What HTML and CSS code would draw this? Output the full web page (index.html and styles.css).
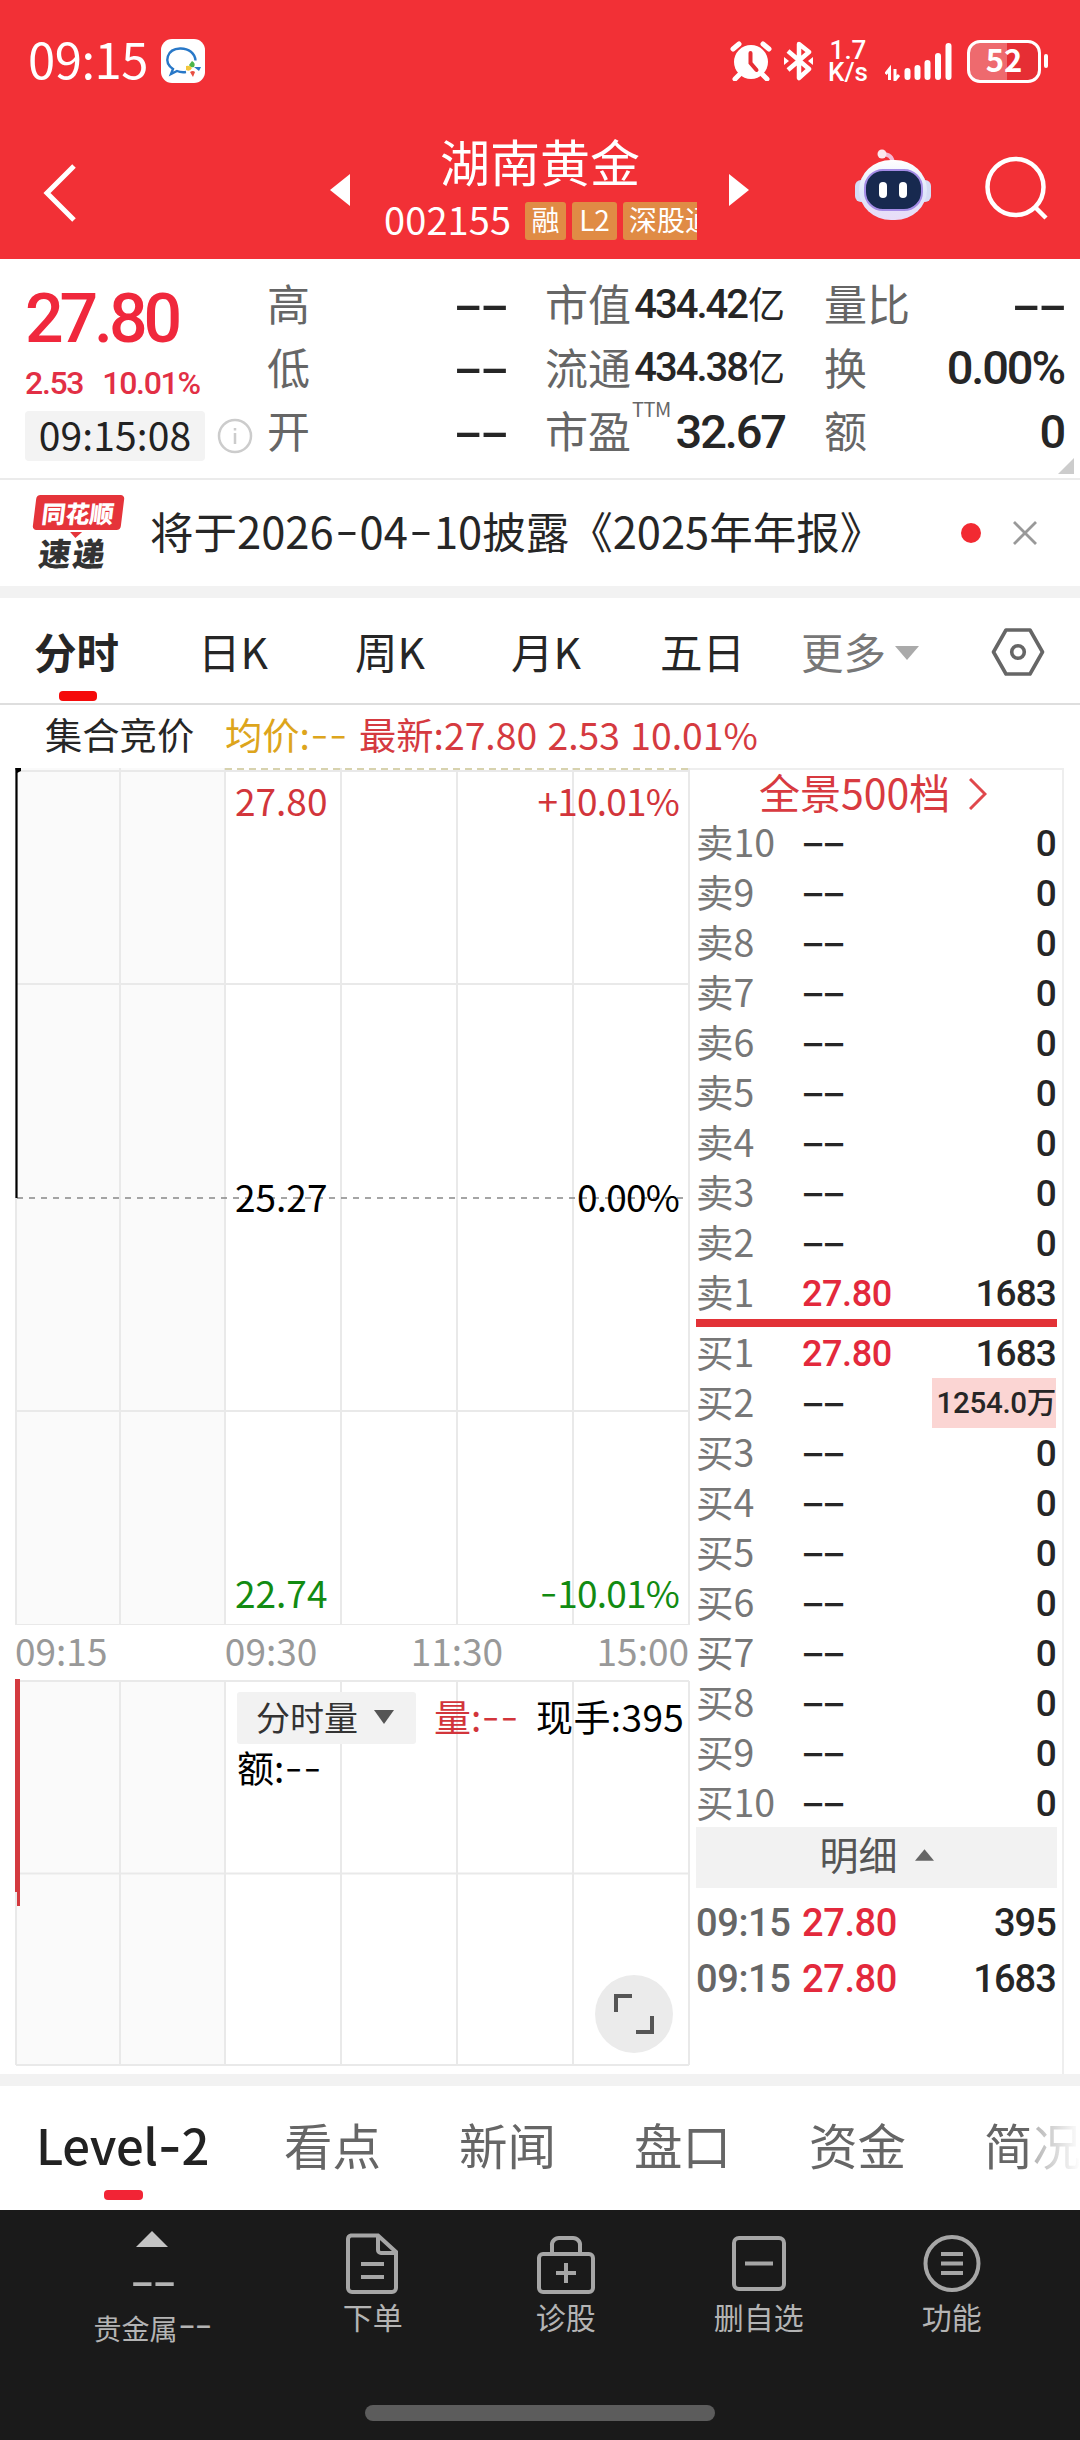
FILE: index.html
```html
<!DOCTYPE html>
<html lang="zh-CN">
<head>
<meta charset="utf-8">
<title>湖南黄金 002155</title>
<link rel="stylesheet" href="styles.css">
</head>
<body>
<div class="app">
  <header class="top">
    <div class="status">
      <span class="clock">09:15</span>
      <svg class="chat" viewBox="0 0 44 44"><rect width="44" height="44" rx="11" fill="#fff"/><path d="M25 33a14 12 0 0 1-9-1l-6 3 2-5C2 23 6 10 19 9.500c9-.3 15 5 15.500 12" fill="none" stroke="#2878c8" stroke-width="2.400"/><path d="M31 22q4 2 2 6-4 1-5-2z" fill="#4ab54a"/><path d="M25 27q4-1 6 2-2 4-6 2z" fill="#f3c63a"/><path d="M33 28l7 0-2 4z" fill="#2878c8"/><path d="M29 33q3-2 5 0l-2 5z" fill="#e85043"/></svg>
      <div class="status-right">
        <svg class="alarm" viewBox="0 0 42 40"><g stroke="#fff" stroke-width="5" stroke-linecap="round"><path d="M3 8l6-5M39 8l-6-5M9 34l-4 4M33 34l4 4"/></g><circle cx="21" cy="21" r="17" fill="#fff"/><path d="M20.500 12v10l6 7" fill="none" stroke="#e62e34" stroke-width="4" stroke-linecap="round"/></svg>
        <svg class="bt" viewBox="0 0 30 40"><path d="M4 10l21 18-10 9V3l10 8L4 29" fill="none" stroke="#fff" stroke-width="4.500" stroke-linejoin="round"/><path d="M0 16l5 4-5 4zM29 16l-5 4 5 4z" fill="#fff"/></svg>
        <div class="speed"><span>1.7</span><span>K/s</span></div>
        <svg class="signal" viewBox="0 0 67 40"><path d="M4.500 39V28l-4 5M10 28v11l4-5" fill="none" stroke="#fff" stroke-width="3"/><g stroke="#fff" stroke-width="6" stroke-linecap="round"><path d="M22.500 30v6M32.500 27v9M42.500 22v14M53 15v21M63.500 5v31"/></g></svg>
        <div class="battery"><span>52</span></div>
        <i class="nub"></i>
      </div>
    </div>
    <nav class="nav">
      <svg class="back" viewBox="0 0 34 60"><path d="M31 3L4 30l27 27" fill="none" stroke="#fff" stroke-width="5"/></svg>
      <svg class="prev" viewBox="0 0 20 32"><path d="M20 0v32L0 16z" fill="#fff"/></svg>
      <div class="name">
        <h1>湖南黄金</h1>
        <div class="code"><span class="num">002155</span><span class="tag">融</span><span class="tag">L2</span><span class="tag">深股通</span></div>
      </div>
      <svg class="next" viewBox="0 0 20 32"><path d="M0 0v32l20-16z" fill="#fff"/></svg>
      <svg class="robot" viewBox="0 0 76 72"><defs><linearGradient id="shell" x2="0" y2="1"><stop offset="0" stop-color="#fff"/><stop offset=".55" stop-color="#dfe6fa"/><stop offset="1" stop-color="#e9dcf8"/></linearGradient></defs><path d="M25 5q12-1 13 9" fill="none" stroke="#f5b9d3" stroke-width="4"/><circle cx="27" cy="5" r="4.500" fill="#fbe9f0"/><rect x="0" y="31" width="12" height="22" rx="6" fill="#d5dcf5"/><rect x="64" y="31" width="12" height="22" rx="6" fill="#d5dcf5"/><rect x="4" y="11" width="68" height="60" rx="32" fill="url(#shell)"/><rect x="10" y="21" width="57" height="40" rx="18" fill="#17294f" stroke="#a48ce6" stroke-width="2"/><rect x="24" y="33" width="8" height="16" rx="4" fill="#fff"/><rect x="44" y="33" width="8" height="16" rx="4" fill="#fff"/></svg>
      <svg class="search" viewBox="0 0 64 66"><circle cx="30.500" cy="31" r="28" fill="none" stroke="#fff" stroke-width="4.500"/><path d="M49 50l12 12" stroke="#fff" stroke-width="4.500"/></svg>
    </nav>
  </header>

  <section class="quote">
    <div class="last">
      <b class="price">27.80</b>
      <div class="chg"><span>2.53</span><span>10.01%</span></div>
      <div class="at"><span class="stamp">09:15:08</span><svg class="info" viewBox="0 0 36 36"><circle cx="18" cy="18" r="16" fill="none" stroke="#ccc" stroke-width="2.500"/><path d="M18 15v11M18 10v2.500" stroke="#ccc" stroke-width="2.500"/></svg></div>
    </div>
    <dl class="stats s1">
      <div><dt>高</dt><dd class="dash">--</dd></div>
      <div><dt>低</dt><dd class="dash">--</dd></div>
      <div><dt>开</dt><dd class="dash">--</dd></div>
    </dl>
    <dl class="stats s2">
      <div><dt>市值</dt><dd class="small">434.42<em>亿</em></dd></div>
      <div><dt>流通</dt><dd class="small">434.38<em>亿</em></dd></div>
      <div><dt>市盈<sup>TTM</sup></dt><dd>32.67</dd></div>
    </dl>
    <dl class="stats s3">
      <div><dt>量比</dt><dd class="dash">--</dd></div>
      <div><dt>换</dt><dd>0.00%</dd></div>
      <div><dt>额</dt><dd>0</dd></div>
    </dl>
    <i class="corner"></i>
  </section>

  <section class="notice">
    <div class="logo"><span class="logo-top">同花顺</span><span class="logo-bottom">速递</span></div>
    <p>将于2026<i>-</i>04<i>-</i>10披露《2025年年报》</p>
    <b class="dot"></b>
    <svg class="close" viewBox="0 0 24 24"><path d="M1 1l22 22M23 1L1 23" stroke="#999" stroke-width="2.800"/></svg>
  </section>

  <nav class="periods">
    <span class="on">分时</span><span>日K</span><span>周K</span><span>月K</span><span>五日</span>
    <span class="more">更多<svg viewBox="0 0 24 14"><path d="M0 0h24L12 14z" fill="#aaa"/></svg></span>
    <svg class="gear" viewBox="0 0 54 50"><path d="M15 3h24L51.500 25 39 47H15L2.500 25z" fill="none" stroke="#666" stroke-width="3.600" stroke-linejoin="round"/><circle cx="27" cy="25" r="6.300" fill="none" stroke="#666" stroke-width="3.600"/></svg>
  </nav>

  <div class="legend"><span class="l1">集合竞价</span><span class="l2">均价:<i>--</i></span><span class="l3">最新:27.80 2.53 10.01%</span></div>

  <main class="market">
    <div class="charts">
      <div class="plot price-plot">
        <svg class="lines" viewBox="0 0 680 857">
          <rect x="1" y="0" width="209" height="857" fill="#fafafa"/>
          <g stroke="#e9e9e9" stroke-width="2" fill="none"><path d="M1 3h673M1 216h673M1 643h673M1 857h673M105 0v857M210 0v857M326 0v857M442 0v857M558 0v857M674 0v857M1 0v857"/></g>
          <path d="M210 1h463" stroke="#d7d2ae" stroke-width="2" stroke-dasharray="7 5"/>
          <path d="M2 430h672" stroke="#888" stroke-width="1.500" stroke-dasharray="6 6"/>
          <path d="M1.500 1v429" stroke="#000" stroke-width="2.200"/><path d="M0 0h6v3l-4 2z" fill="#000"/>
        </svg>
        <div class="lab up"><span>27.80</span><span>+10.01%</span></div>
        <div class="lab"><span>25.27</span><span>0.00%</span></div>
        <div class="lab down"><span>22.74</span><span><i>-</i>10.01%</span></div>
      </div>
      <div class="axis"><span>09:15</span><span>09:30</span><span>11:30</span><span>15:00</span></div>
      <div class="plot volume-plot">
        <svg class="lines" viewBox="0 0 680 387">
          <rect x="1" y="1" width="209" height="385" fill="#fafafa"/>
          <g stroke="#e9e9e9" stroke-width="2" fill="none"><path d="M1 2h673M1 194.500h673M1 386h673M105 2v384M210 2v384M326 2v384M442 2v384M558 2v384M674 2v384M1 2v384"/></g>
          <path d="M0 0h5v227H2v-14H0z" fill="#d33a3f"/>
        </svg>
        <div class="vol-head">
          <button class="pick">分时量<svg viewBox="0 0 20 14"><path d="M0 0h20L10 14z" fill="#555"/></svg></button>
          <span class="vol">量:<i>--</i></span><span class="hand">现手:395</span>
        </div>
        <div class="amount">额:<i>--</i></div>
        <div class="expand"><svg viewBox="0 0 40 40"><path d="M2 18V2h16M38 22v16H22" fill="none" stroke="#555" stroke-width="4"/></svg></div>
      </div>
    </div>

    <aside class="book">
      <div class="book-head">全景500档<svg viewBox="0 0 18 32"><path d="M1 1l15 15L1 31" fill="none" stroke="#e0484c" stroke-width="3"/></svg></div>
      <div class="row"><span>卖10</span><i>--</i><b>0</b></div>
      <div class="row"><span>卖9</span><i>--</i><b>0</b></div>
      <div class="row"><span>卖8</span><i>--</i><b>0</b></div>
      <div class="row"><span>卖7</span><i>--</i><b>0</b></div>
      <div class="row"><span>卖6</span><i>--</i><b>0</b></div>
      <div class="row"><span>卖5</span><i>--</i><b>0</b></div>
      <div class="row"><span>卖4</span><i>--</i><b>0</b></div>
      <div class="row"><span>卖3</span><i>--</i><b>0</b></div>
      <div class="row"><span>卖2</span><i>--</i><b>0</b></div>
      <div class="row"><span>卖1</span><em>27.80</em><b>1683</b></div>
      <div class="split"></div>
      <div class="row"><span>买1</span><em>27.80</em><b>1683</b></div>
      <div class="row"><span>买2</span><i>--</i><b class="big">1254.0万</b></div>
      <div class="row"><span>买3</span><i>--</i><b>0</b></div>
      <div class="row"><span>买4</span><i>--</i><b>0</b></div>
      <div class="row"><span>买5</span><i>--</i><b>0</b></div>
      <div class="row"><span>买6</span><i>--</i><b>0</b></div>
      <div class="row"><span>买7</span><i>--</i><b>0</b></div>
      <div class="row"><span>买8</span><i>--</i><b>0</b></div>
      <div class="row"><span>买9</span><i>--</i><b>0</b></div>
      <div class="row"><span>买10</span><i>--</i><b>0</b></div>
      <div class="detail-head">明细<svg viewBox="0 0 18 11"><path d="M0 11h18L9 0z" fill="#666"/></svg></div>
      <div class="row trade"><span>09:15</span><em>27.80</em><b>395</b></div>
      <div class="row trade"><span>09:15</span><em>27.80</em><b>1683</b></div>
    </aside>
  </main>

  <nav class="sections">
    <span class="on">Level<i>-</i>2</span><span>看点</span><span>新闻</span><span>盘口</span><span>资金</span><span>简况</span>
  </nav>

  <footer class="bottom">
    <div class="tools">
      <div class="metal"><svg viewBox="0 0 32 16"><path d="M0 16h32L16 0z" fill="#c4c4c4"/></svg><i>--</i><span>贵金属<i>--</i></span></div>
      <div class="tool"><svg viewBox="0 0 60 64"><path d="M8 3.500h27L53 20v36a4 4 0 0 1-4 4H9a4 4 0 0 1-4-4V7a4 4 0 0 1 3-3.500zM35 4v14a3 3 0 0 0 3 3h15M18 32h23M18 45h23"/></svg><span>下单</span></div>
      <div class="tool"><svg viewBox="0 0 60 64"><rect x="3" y="22" width="54" height="38" rx="4"/><path d="M16 22V14a7 7 0 0 1 7-8h14a7 7 0 0 1 7 8v8M30 31v20M20 41h20"/></svg><span>诊股</span></div>
      <div class="tool"><svg viewBox="0 0 60 64"><rect x="5" y="6" width="50" height="51" rx="5"/><path d="M16 31.500h28"/></svg><span>删自选</span></div>
      <div class="tool"><svg viewBox="0 0 60 64"><circle cx="30" cy="31.500" r="26.500"/><path d="M19 22h22M19 31.500h22M19 41h22"/></svg><span>功能</span></div>
    </div>
    <div class="home"></div>
  </footer>
</div>
</body>
</html>
```
FILE: styles.css
```css
* { box-sizing: border-box; margin: 0; padding: 0; }
body { width: 1080px; background: #fff; font-family: "Noto Sans CJK SC", sans-serif; color: #262626; }
i, em { font-style: normal; }
i { font-family: Inter, sans-serif; font-weight: 300; font-size: 1.12em; line-height: 1; }
svg { display: block; flex: none; }
.app { width: 1080px; height: 2440px; overflow: hidden; display: flex; flex-direction: column; white-space: nowrap; }
.app > * { flex: none; }

/* header */
.top { height: 259px; background: #f23036; color: #fff; }
.status { height: 122px; display: flex; align-items: center; padding: 0 32px 0 28px; }
.clock { font-size: 49px; line-height: 60px; width: 133px; margin-top: -7px; letter-spacing: -.5px; }
.chat { width: 44px; height: 44px; }
.status-right { margin-left: auto; display: flex; align-items: center; height: 44px; }
.alarm { width: 42px; height: 40px; margin-right: 12px; }
.bt { width: 30px; height: 40px; margin-right: 12px; }
.speed { width: 44px; display: flex; flex-direction: column; font: 500 26px/22px Roboto, sans-serif; align-items: center; margin-right: 15px; }
.signal { width: 67px; height: 40px; margin-right: 15px; }
.battery { width: 74px; height: 43px; border: 3.500px solid #fff; border-radius: 13px; background: linear-gradient(90deg, #ee6a6e 55%, #e62e34 55%); font: 700 31px/34px "Noto Sans CJK SC", sans-serif; text-align: center; }
.battery span { display: block; margin-top: -1px; }
.nub { width: 4px; height: 14px; background: #fff; border-radius: 3px; margin-left: 3px; }
.nav { height: 137px; display: flex; align-items: flex-start; padding: 7px 31px 0 43px; }
.back { width: 34px; height: 60px; margin-top: 34px; }
.prev { width: 20px; height: 32px; margin: 45px 0 0 253px; }
.name { width: 314px; margin: -3px 0 0 33px; display: flex; flex-direction: column; align-items: center; }
.name h1 { font-size: 50px; font-weight: 400; line-height: 68px; }
.code { width: 314px; height: 58px; overflow: hidden; display: flex; align-items: center; gap: 6px; }
.code .num { font-size: 38px; line-height: 56px; width: 135px; letter-spacing: .1px; margin: -9px 0 0 1px; flex: none; }
.tag { background: #e08b45; border-radius: 3px; height: 38px; font-size: 28px; line-height: 34px; padding: 0 6.500px; flex: none; margin-top: -4px; }
.tag:nth-child(3) { width: 45px; text-align: center; }
.name .tag:last-child { padding: 0 6px; }
.next { width: 20px; height: 32px; margin: 45px 0 0 32px; }
.robot { width: 76px; height: 72px; margin: 20px 0 0 106px; }
.search { width: 64px; height: 66px; margin: 27px 0 0 54px; }

/* quote panel */
.quote { height: 221px; border-bottom: 2px solid #ebebeb; display: flex; position: relative; }
.last { width: 267px; padding: 27px 0 0 25px; color: #f0283c; font-family: Roboto, "Noto Sans CJK SC", sans-serif; }
.price { display: block; font-size: 68px; font-weight: 500; line-height: 66px; letter-spacing: -4.100px; }
.chg { display: flex; gap: 19px; font-size: 32px; font-weight: 500; line-height: 38px; margin-top: 12px; letter-spacing: -1.300px; color: #e22f45; }
.at { display: flex; align-items: center; margin-top: 9px; }
.stamp { width: 180px; height: 50px; border-radius: 4px; background: #f3f3f3; color: #222; font: 400 39px/46px "Noto Sans CJK SC", sans-serif; text-align: center; letter-spacing: .1px; }
.info { width: 36px; height: 36px; margin-left: 12px; }
.stats { padding-top: 14px; }
.stats div { height: 63.500px; display: flex; align-items: center; justify-content: space-between; }
.stats dt { font-size: 43px; line-height: 56px; color: #666; position: relative; margin-top: -5px; }
.stats dd { font: 500 47px/56px Roboto, sans-serif; letter-spacing: -2.100px; color: #262626; }
.stats dd.small { font-size: 40px; letter-spacing: -2px; display: flex; }
.stats dd em { font: 400 37px/52px "Noto Sans CJK SC", sans-serif; letter-spacing: 0; margin-left: 1px; }
.stats .dash { font: 500 46px/56px Inter, sans-serif; letter-spacing: -3.600px; transform: scaleX(1.500); transform-origin: 100% 50%; margin-right: 1px; }
.stats sup { position: absolute; left: 87px; top: -7px; font-size: 20px; line-height: 30px; letter-spacing: -.5px; }
.s1 { width: 239px; }
.s2 { width: 240px; margin-left: 39px; }
.s3 { width: 240px; margin-left: 39px; }
.corner { position: absolute; right: 6px; bottom: 4px; border-left: 16px solid transparent; border-bottom: 16px solid #ccc; }

/* notice */
.notice { height: 118px; border-bottom: 12px solid #f2f2f2; display: flex; align-items: center; padding: 0 43px 0 29px; }
.logo { width: 93px; height: 76px; display: flex; flex-direction: column; align-items: center; transform: skewX(-7deg); font-weight: 900; position: relative; color: #333; }
.logo::before { content: ""; position: absolute; left: 41px; top: 37px; border: 6px solid transparent; border-top-color: #e5343a; border-bottom: 0; }
.logo-top { width: 88px; height: 38px; border-radius: 4px; background: #e5343a; color: #fff; font-size: 24px; line-height: 35px; text-align: center; }
.logo-bottom { font-size: 32px; line-height: 40px; letter-spacing: 2px; margin-top: 2px; }
.notice p { font-size: 43.500px; line-height: 60px; margin: -5px 0 0 28px; width: 811px; }
.notice p i { display: inline-block; width: 26px; text-align: center; transform: scaleX(1.150); }
.dot { width: 20px; height: 20px; border-radius: 50%; background: #f22a32; flex: none; }
.close { width: 24px; height: 24px; margin-left: 32px; }

/* period tabs */
.periods { height: 107px; border-bottom: 2px solid #dedede; display: flex; align-items: center; padding: 0 35px 0 34px; font-size: 42.500px; line-height: 60px; }
.periods > span { position: relative; margin-top: 1px; }
.periods .on { font-weight: 700; width: 164px; }
.periods .on::after { content: ""; position: absolute; left: 25px; top: 70px; width: 38px; height: 10px; border-radius: 4px; background: #f50a0a; }
.periods span:nth-child(2) { width: 157px; }
.periods span:nth-child(3) { width: 156px; }
.periods span:nth-child(4) { width: 149px; }
.periods span:nth-child(5) { width: 141px; }
.periods .more { color: #777; display: flex; align-items: center; gap: 9px; width: 190px; }
.more svg { width: 24px; height: 14px; margin-top: 3px; }
.gear { width: 54px; height: 50px; margin: 3px 0 0 auto; }

.legend { height: 63px; display: flex; align-items: center; font-size: 37.300px; line-height: 58px; padding: 0 0 5px 45px; }
.l1 { width: 180px; }
.l2 { width: 134px; color: #dda51c; }
.l3 { color: #d53a40; word-spacing: 2px; }

/* charts */
.market { height: 1306px; display: flex; padding-left: 15px; }
.charts { width: 674px; position: relative; }
.plot { position: relative; width: 674px; }
.lines { position: absolute; left: 0; top: 0; width: 680px; height: 100%; }
.price-plot { height: 857px; display: flex; flex-direction: column; justify-content: space-between; padding: 7px 10px 8px 220px; font-size: 37px; line-height: 50px; color: #000; }
.lab { display: flex; justify-content: space-between; position: relative; height: 50px; }
.lab span + span { letter-spacing: -.8px; }
.price-plot .up { color: #d2353b; }
.price-plot .down { color: #128b12; }
.axis { height: 54px; display: flex; color: #999; font-size: 37px; line-height: 50px; }
.axis span:nth-child(1) { width: 210px; }
.axis span:nth-child(2) { width: 186px; }
.axis span:nth-child(3) { width: 186px; }
.volume-plot { height: 387px; font-size: 37px; line-height: 50px; color: #000; padding: 13px 4px 0 222px; }
.vol-head { position: relative; display: flex; line-height: 48px; height: 50px; }
.pick { width: 179px; height: 52px; border: 0; background: #f2f2f2; font: 400 34px/48px "Noto Sans CJK SC", sans-serif; color: #333; display: flex; align-items: center; padding: 0 0 2px 19px; gap: 16px; border-radius: 3px; flex: none; }
.pick svg { width: 20px; height: 14px; }
.vol { color: #d2353b; margin-left: 18px; width: 102px; }
.hand { letter-spacing: .4px; }
.amount { position: relative; }
.expand { position: absolute; left: 580px; top: 296px; width: 78px; height: 78px; border-radius: 50%; background: #ebebeb; display: flex; align-items: center; justify-content: center; }
.expand svg { width: 40px; height: 40px; }

/* order book */
.book { width: 375px; padding: 0 6px 0 7px; border-top: 2px solid #eee; border-right: 2px solid #eee; }
.book-head { height: 48px; display: flex; gap: 19px; padding: 0 0 6px 63px; align-items: center; font-size: 41px; line-height: 48px; color: #d83a40; }
.book-head svg { width: 18px; height: 32px; margin-top: 5px; }
.row { height: 50px; display: flex; align-items: center; line-height: 50px; }
.row span { width: 106px; font-size: 37.500px; color: #777; margin-top: -4px; }
.row i { font: 400 40px/50px Inter, sans-serif; letter-spacing: -3.600px; transform: scaleX(1.420); transform-origin: 0 50%; margin-left: -2px; }
.row em { font: 500 36px/50px Roboto, sans-serif; color: #e3293c; letter-spacing: -.4px; margin-top: 1px; }
.row b { margin: 1px 0 0 auto; font: 500 37px/50px Roboto, sans-serif; letter-spacing: -.9px; }
.row .big { background: #fbd5d3; font-size: 29.500px; width: 124px; height: 50px; margin-top: 0; text-align: right; font-family: Roboto, "Noto Sans CJK SC", sans-serif; letter-spacing: -.3px; }
.split { height: 8px; background: #e23237; margin: 1px 0; width: 361px; }
.detail-head { height: 61px; width: 361px; background: #f2f2f2; color: #555; font-size: 39px; line-height: 56px; display: flex; justify-content: center; gap: 17px; align-items: center; padding-bottom: 9px; margin: -1px 0 7px; }
.detail-head svg { width: 19px; height: 12px; margin-top: 4px; }
.trade { height: 56px; }
.row.trade span { font-family: Roboto, sans-serif; font-size: 38px; font-weight: 500; color: #666; margin-top: 0; letter-spacing: -.4px; }
.row.trade em { font-size: 38px; margin-top: 0; }
.row.trade b { font-size: 38px; margin-top: 0; }

/* section tabs */
.sections { height: 136px; border-top: 12px solid #f2f2f2; display: flex; padding: 26px 0 0 36px; font-size: 48.500px; line-height: 64px; color: #666; overflow: hidden; position: relative; }
.sections span { width: 175px; flex: none; }
.sections .on { width: 248px; color: #222; font-weight: 500; font-size: 49px; letter-spacing: -.3px; }
.sections .on i { font-weight: 500; font-size: 52px; }
.sections .on::after { content: ""; display: block; width: 39px; height: 10px; border-radius: 4px; background: #f22435; margin: 14px 0 0 68px; }
.sections::after { content: ""; position: absolute; right: 0; top: 0; width: 48px; height: 100%; background: linear-gradient(90deg, rgba(255,255,255,.5), #fff); }

/* bottom bar */
.bottom { height: 230px; background: #1a1a1a; color: #b4b4b4; }
.tools { height: 195px; display: flex; }
.metal { width: 304px; display: flex; flex-direction: column; align-items: center; padding-top: 21px; }
.metal svg { width: 32px; height: 16px; }
.metal > i { font: 300 60px/46px Inter, sans-serif; letter-spacing: -5px; margin: 11px 0 3px -2px; }
.metal span { font-size: 28px; line-height: 40px; height: 40px; }
.metal span i { font: 300 42px/36px Inter, sans-serif; letter-spacing: -2.500px; }
.tool { width: 193.500px; display: flex; flex-direction: column; align-items: center; padding-top: 22px; font-size: 30px; line-height: 40px; margin-left: -.5px; }
.tool:nth-child(2) { margin-left: -28px; }
.tool svg { width: 60px; height: 64px; fill: none; stroke: #a6a6a6; stroke-width: 4px; }
.home { width: 350px; height: 16px; border-radius: 8px; background: #5c5c5c; margin: 0 auto; }
```
